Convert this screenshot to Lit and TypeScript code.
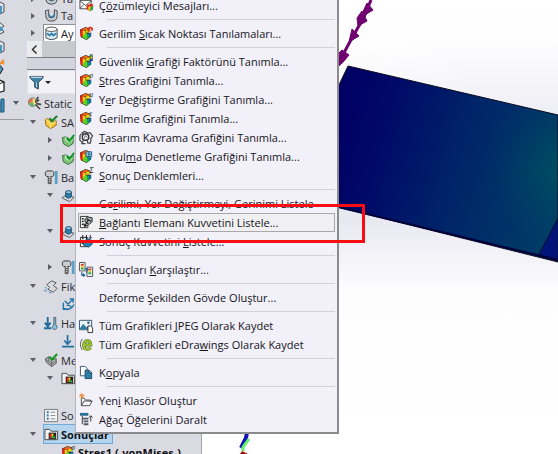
import { LitElement, html, css, svg, nothing, TemplateResult } from "lit";
import { customElement } from "lit/decorators.js";
import { classMap } from "lit/directives/class-map.js";

const cube = svg`
  <path d="M1 4 7 1l5 2v3l-4 2 5-1v4l-5 4-6-3z" fill="#222"/>
  <path d="M1.500 4 5 3v10L1.500 11z" fill="#f02015"/>
  <path d="M3.500 3.500 7 1.500l4.500 2L7 5z" fill="#f86a10"/>
  <path d="M4 4.500 7 5.500v4L4 11z" fill="#ffd21a"/>
  <path d="M7 5 11.500 3.500v2.500L8 7.500z" fill="#e8e010"/>
  <path d="M4 10l3-2.500 1.500.5v6.500L4 12.500z" fill="#5fd320"/>
  <path d="M8.500 9 12.500 7.500v3.500L8.500 14.500z" fill="#12b04a"/>
  <path d="M10.500 8.200 12.500 7.500v3.500l-2 1.600z" fill="#1560d0"/>`;

const badge = (t: string) => svg`${cube}<text class="badge" x="11" y="5">${t}</text>`;

const miniPlot = svg`<path d="M5 6h8v7H5z" fill="#222"/><path d="M6 7h2v5H6z" fill="#e8261c"/><path d="M8 7h2v3H8z" fill="#f7d51d"/><path d="M8 10h4v2H8z" fill="#35b53a"/>`;

const bolt = svg`<path d="M1.500 2.500 3 1h6l1.500 1.500v3L9 7H3L1.500 5.500z" fill="#c9ccd0" stroke="#333"/><path d="M4.500 7v7.500h3V7M4.500 9h3M4.500 11h3M4.500 13h3" fill="#eee" stroke="#444"/><path d="M11.500 1h3v14h-3z" fill="#5ba0c8"/>`;

const bearing = svg`<path d="M1 10.500 6 7l8 3-5 4.500z" fill="#d9dbe0" stroke="#555"/><path d="M5 4.500v5l3 1.500 3-1.500v-5z" fill="#2b80ae" stroke="#1d4c6b"/><ellipse cx="8" cy="4.500" rx="3" ry="1.800" fill="#8cc5e0" stroke="#1d4c6b"/>`;

const folderPlot = svg`<path d="M1 13.500v-11h5l1.500 2h7v9z" fill="#f2f2f4" stroke="#444"/>${miniPlot}`;

const greenPart = svg`<path d="M1.500 5 5 4l4 2.500L13 5v6l-5 3.500-5.500-3z" fill="#7cc576" stroke="#2f6b35"/><path d="M5 4v4l4 2 4-3" fill="none" stroke="#d3efcf"/><path d="M6.500 5.500 9 8.500 14 2" fill="none" stroke="#119a24" stroke-width="2"/>`;

const icons: Record<string, TemplateResult> = {
  mail: svg`<path d="M1 2.500h12v9H1z" fill="#fff" stroke="#444"/><path d="m1 3 6 5 6-5M1 11l4-4M13 11 9 7" fill="none" stroke="#444"/><path d="m8 8 4-2 3 1v5l-3 2-4-2z" fill="#e22c1c"/><path d="M10 9h3v5l-3-1z" fill="#f4d01c"/><path d="M12 10l3-2v4l-3 2z" fill="#20a548"/>`,
  hotspot: svg`${cube}<path d="M10 6V3q2-3 4 0v2" fill="none" stroke="#e52a17" stroke-width="1.800"/>`,
  factor: svg`${cube}<path d="M11.500.5h3v7h-3z" fill="#222"/><path d="M12 1h2v2h-2z" fill="#36b63b"/><path d="M12 3h2v2h-2z" fill="#f6dc1a"/><path d="M12 5h2v2h-2z" fill="#1850cf"/>`,
  stress: badge("σ"),
  disp: badge("u"),
  strain: badge("ε"),
  equation: badge("Σ"),
  insight: svg`<path d="M4 2.500 6 1.500 9 3h3l2.500 3.500L12 10" fill="none" stroke="#444" stroke-width="1.300"/><path d="M2.500 4 1 6v5l2 2M3.500 2v2.500" fill="none" stroke="#444" stroke-width="1.300"/><circle cx="7" cy="7.500" r="3.500" fill="#dfe6ee" stroke="#333" stroke-width="1.500"/><path d="M5 10.500 3 14.500h4M8.500 10.500l1 3.500h2.500l1-4" stroke="#444" stroke-width="1.300" fill="none"/><path d="M5.500 8.500 7 6l2 2" fill="none" stroke="#6a7580"/>`,
  fatigue: svg`${cube}<path d="M7.500 3h6v5h-6z" fill="#a8d6ec" stroke="#226285"/><path d="M9 5.500h4M10.500 3v5" stroke="#226285"/>`,
  forces: svg`<path d="M1.500 1.500h8v12h-8z" fill="#f4f4f4" stroke="#333"/><path d="M3 4h2M3 7h2M3 10h2" stroke="#222" stroke-width="1.500"/><path d="m6 5 3-3 5 1v4l-3 3-4-2z" fill="#aeb2b6" stroke="#222"/><path d="m10 5-4 7m-1-3 1 3 3-1M8 4l5 3" stroke="#222" fill="none" stroke-width="1.300"/>`,
  result: svg`<path d="M1.500 3.500h7v10h-7z" fill="#f4f4f4" stroke="#333"/><path d="M3 7h2M3 10h3" stroke="#222" stroke-width="1.500"/><path d="m5 8 4-3 5 2v4l-4 3-5-2z" fill="#2a83b5" stroke="#1b4c6e"/><path d="M4 1v4M8 1v4M12 1v4M2.500 3.500 4 5l1.500-1.500M6.500 3.500 8 5l1.500-1.500M10.500 3.500 12 5l1.500-1.500" stroke="#222" fill="none"/>`,
  compare: svg`<path d="M.5.500h6v9h-6zM8.500 5.500h6v10h-6z" fill="#eee" stroke="#555"/><path d="M2 2h3v2H2z" fill="#e33123"/><path d="M2 4h3v2H2z" fill="#f1cf23"/><path d="M2 6h3v2H2z" fill="#2da84a"/><path d="M10 7h3v2h-3z" fill="#e33123"/><path d="M10 9h3v2h-3z" fill="#f1cf23"/><path d="M10 11h3v2h-3z" fill="#2da84a"/><path d="M3 11v3h3m-1.500-1.500L6 14l-1.500 1.500M6.500 8q2-2 3 0l-1.500 2v1.500" fill="none" stroke="#1c5f92" stroke-width="1.300"/>`,
  jpeg: svg`<path d="M.5 2.500h13v10H.5z" fill="#eaf4fa" stroke="#31566e"/><path d="M1 11l3.500-5L8 10l2-2 3 4H1z" fill="#2e7ba5"/><circle cx="10" cy="5" r="1.300" fill="#31566e"/><path d="M9.500 8.500h3l2 2v5h-5z" fill="#fff" stroke="#333"/>`,
  edraw: svg`<path d="M3.500 2Q-.5 8 3.500 14" fill="none" stroke="#555"/><path d="M5.500 8.500h7Q12.500 4 9 4T5 8.500q0 4.500 4 4.500 2 0 3.500-1.500" fill="none" stroke="#557a12" stroke-width="3.200"/><path d="M5.500 8.500h7Q12.500 4 9 4T5 8.500q0 4.500 4 4.500 2 0 3.500-1.500" fill="none" stroke="#a5cc35" stroke-width="1.800"/>`,
  copy: svg`<path d="M1.500 1.500h5l2 2v8h-7z" fill="#fff" stroke="#34536a"/><path d="M6.500 5.500h4l3 3v6h-7z" fill="#2b7fae" stroke="#1b4a68"/><path d="M10.500 5.500v3h3z" fill="#d4e9f4" stroke="#1b4a68"/>`,
  folder: svg`<path d="M2.500 13.500v-8h3l1.500 2h5v2M2.500 13.500l3-5h8.500l-2.500 5z" fill="#f5f5f7" stroke="#4a4a4a"/><path d="M3 0v6M0 3h6M1 1l4 4M5 1 1 5" stroke="#ee8b2d"/>`,
  collapse: svg`<path d="M1 1h9v3H1z" fill="#2c6f96"/><path d="M4 6h6v2H4zM5 9h5v2H5zM5 12h5v2H5z" fill="#4c5a64"/><path d="M3.500 4v9M12.500 10V4m-2 2 2-2 2 2" fill="none" stroke="#333"/>`,
  study: svg`<circle cx="6" cy="6.500" r="4.500" fill="#f4e27a"/><path d="M6 2a4.500 4.500 0 0 0-4 6.500L6 6.500z" fill="#e8704d"/><path d="M2 8.500A4.500 4.500 0 0 0 8 10.500L6 6.500z" fill="#5cbf72"/><path d="m9 9 5 5M12 1 9 6M13 4 9 7M10 8l5 1" stroke="#333" stroke-width="1.500"/><circle cx="6" cy="6.500" r="4.500" fill="none" stroke="#777"/>`,
  part: svg`<path d="M1.500 5 4 3.500l4 4L13 6v5l-6 3.500L2 11z" fill="#f4c936" stroke="#9c6d0c"/><path d="m3 5 4 5 6-3M7 10v4" fill="none" stroke="#fff1a8"/><path d="M6 3.500 8.500 6.500 14 1" fill="none" stroke="#17802a" stroke-width="2.200"/>`,
  green: greenPart,
  bolt,
  bearing,
  fixture: svg`<path d="M3 6 8 2l5 2-3 3 4 3-4 4-6-3 2-2z" fill="#d7dade" stroke="#555"/><path d="M1 9l2 1M0 12l3 1M5 14l3 1" stroke="#3184b4"/>`,
  anchor: svg`<path d="m4 4 8 8M12 3l-6 6M2.500 6v7h6M9 2h4v4" fill="none" stroke="#2575a6" stroke-width="1.500"/><path d="M3 12q6 4 11-4" fill="none" stroke="#2575a6" stroke-width="1.500"/>`,
  load: svg`<path d="M4 1v9M1 7l3 4 3-4M0 13h8" fill="none" stroke="#1f6c9c" stroke-width="2"/><path d="M10.500 1.500h2v8a2.500 2.500 0 1 1-2 0z" fill="#8bbfda" stroke="#4a6170"/>`,
  down: svg`<path d="M7 1v10M3.500 7 7 11l3.500-4M1 13.500h13" fill="none" stroke="#236f9d" stroke-width="1.800"/>`,
  mesh: svg`<path d="M1.500 6 5 4l4 3 4-1v5l-5 3.500L2.500 10z" fill="#aeb1b5" stroke="#555"/><path d="m2 7 6 5 5-4M5 4v5M8 8v6" fill="none" stroke="#666"/><path d="M6 4 8.500 7 14 1" fill="none" stroke="#159526" stroke-width="2.200"/>`,
  folderPlot,
  options: svg`<path d="M.5 1.500h14v13H.5z" fill="#f3f4f6" stroke="#777"/><path d="M3 4.500h2M3 8h2M3 11.500h2" stroke="#2c789f" stroke-width="2"/><path d="M7 4.500h5M7 8h5M7 11.500h5" stroke="#888"/>`,
  stress1: badge("σ"),
  cup: svg`<path d="M1.500 3 5 2v6q0 2.500 3 2.500t3-2.500V2l3 1v5q0 6-6 6T2 8z" fill="#c3cdd4" stroke="#444"/><path d="M5 7q3 5 6 0" fill="none" stroke="#2b7ca8" stroke-width="1.500"/>`,
  barrel: svg`<path d="M2 3.500v9q6 4 12 0v-9z" fill="#dbeaf2" stroke="#444"/><ellipse cx="8" cy="3.500" rx="6" ry="2.300" fill="#fff" stroke="#444"/><path d="m3 8 3 2 2-2 2 2 3-2" fill="none" stroke="#2c80ad" stroke-width="2"/>`,
  funnel: svg`<path d="M1 1.500h14v1.500L10 8v7l-4-2V8L1 3z" fill="#3b83ab" stroke="#33454f"/><path d="M2 2.500h12" stroke="#b6d9ea" stroke-width="1.500"/><path d="M8 8v5" stroke="#b6d9ea"/>`,
  tool: svg`<path d="M1 4 8 1l6 3v8l-6 3-7-3z" fill="#dfe3e8" stroke="#4a4f55"/><path d="M8 6h4v7l-4 1z" fill="#4a97c0"/>`,
  tool2: svg`<path d="M1 5 8 1l6 5-3 2 3 4-6 3-7-3z" fill="#e4e6ea" stroke="#4a4f55"/><path d="M7 9q4-5 6 0v2H7z" fill="#4a97c0"/>`,
  wand: svg`<path d="M1 5q8-2 12 5l-3 5-9-3z" fill="#4a97c0" stroke="#222"/><path d="m10 5 4-4M14 5l-2-2" stroke="#ee8b2d" stroke-width="2"/>`,
  box: svg`<path d="M1 4 7 1l7 3v9l-7 2-6-2z" fill="#fff" stroke="#222" stroke-width="1.300"/><path d="m1 4 8 2 5-2M9 6v9" fill="none" stroke="#222"/>`,
  columns: svg`<path d="M1 3h4v12H1zM6 3h4v12H6zM11 1h3v13h-3z" fill="#3d92c0" stroke="#1d5478"/>`,
};

const icon = (name: string) =>
  html`<svg class="icon" viewBox="0 0 16 16" aria-hidden="true">${icons[name]}</svg>`;

type Entry = { icon?: string; label: string; hot?: boolean } | null;

const MENU: Entry[] = [
  { icon: "mail", label: "Ç_özümleyici Mesajları..." },
  null,
  { icon: "hotspot", label: "Gerilim _Sıcak Noktası Tanılamaları..." },
  null,
  { icon: "factor", label: "Güvenlik _Grafiği Faktörünü Tanımla..." },
  { icon: "stress", label: "_Stres Grafiğini Tanımla..." },
  { icon: "disp", label: "Y_er Değiştirme Grafiğini Tanımla..." },
  { icon: "strain", label: "Gerilme Grafi_ğini Tanımla..." },
  { icon: "insight", label: "_Tasarım Kavrama Grafiğini Tanımla..." },
  { icon: "fatigue", label: "Yorul_ma Denetleme Grafiğini Tanımla..." },
  { icon: "equation", label: "_Sonuç Denklemleri..." },
  null,
  { label: "Ge_rilimi, Yer Değiştirmeyi, Gerinimi Listele" },
  { icon: "forces", label: "_Bağlantı Elemanı Kuvvetini Listele...", hot: true },
  { icon: "result", label: "Sonuç Kuvvetini _Listele..." },
  null,
  { icon: "compare", label: "Sonuçları _Karşılaştır..." },
  null,
  { label: "Deforme Şekilden Gövde Oluştur..." },
  null,
  { icon: "jpeg", label: "Tüm Grafikleri _JPEG Olarak Kaydet" },
  { icon: "edraw", label: "Tüm Grafikleri eDra_wings Olarak Kaydet" },
  null,
  { icon: "copy", label: "K_opyala" },
  null,
  { icon: "folder", label: "Yen_i Klasör Oluştur" },
  { icon: "collapse", label: "Ağaç Öğelerini Daralt" },
];

interface Node { level: number; arrow?: "open" | "closed"; icon?: string; label?: string; bold?: boolean; selected?: boolean }

const TREE: Node[] = [
  { level: 0, arrow: "open", icon: "study", label: "Static" },
  { level: 1, arrow: "open", icon: "part", label: "SA" },
  { level: 2, arrow: "closed", icon: "green" },
  { level: 2, arrow: "closed", icon: "green" },
  { level: 1, arrow: "open", icon: "bolt", label: "Ba" },
  { level: 2, arrow: "open", icon: "bearing" },
  { level: 2 },
  { level: 2, arrow: "open", icon: "bearing" },
  { level: 2 },
  { level: 2, arrow: "closed", icon: "bolt" },
  { level: 1, arrow: "open", icon: "fixture", label: "Fik" },
  { level: 2, icon: "anchor" },
  { level: 1, arrow: "open", icon: "load", label: "Ha" },
  { level: 2, icon: "down" },
  { level: 1, arrow: "open", icon: "mesh", label: "Me" },
  { level: 2, arrow: "open", icon: "folderPlot" },
  { level: 2 },
  { level: 1, icon: "options", label: "So" },
  { level: 1, arrow: "open", icon: "folderPlot", label: "Sonuçlar", bold: true, selected: true },
  { level: 2, icon: "stress1", label: "Stres1 (-vonMises-)", bold: true },
];

const base = css`
  * { box-sizing: border-box; }
  button { font: inherit; color: inherit; background: none; border: 0; padding: 0; margin: 0; text-align: left; }
  .icon { display: block; width: 16px; height: 16px; flex: none; overflow: visible; }
  .badge { font: italic 8px "Liberation Serif", serif; fill: #111; }
`;

@customElement("context-menu")
export class ContextMenu extends LitElement {
  static styles = [base, css`
    :host { display: block; background: #f2f0f8; border: 1px solid #b4b4bc; border-right: 2px solid #8c8c8f; border-bottom: 2px solid #8c8c8f; padding: 0 2px 3px; color: #15151c; font: 11px/17px "Open Sans", "Noto Sans", sans-serif; }
    .item { display: grid; grid-template-columns: 15px 1fr; gap: 5px; align-items: center; width: 100%; height: 19px; border: 1px solid transparent; white-space: nowrap; }
    .item.hot { background: #f0eff1; border-color: #a8a8ac; }
    .icon { width: 15px; height: 15px; }
    .sep { height: 9px; padding: 4px 0; margin-left: 29px; }
    .sep::before { content: ""; display: block; height: 1px; background: #d2d1da; }
    .text { grid-column: 2; }
  `];

  private label(text: string) {
    const at = text.indexOf("_");
    if (at < 0) return text;
    return html`${text.slice(0, at)}<u>${text[at + 1]}</u>${text.slice(at + 2)}`;
  }

  render() {
    return html`<div role="menu">${MENU.map((e) => e
      ? html`<button role="menuitem" class=${classMap({ item: true, hot: !!e.hot })}>${e.icon ? icon(e.icon) : nothing}<span class="text">${this.label(e.label)}</span></button>`
      : html`<div class="sep" role="separator"></div>`)}</div>`;
  }
}

@customElement("feature-tree")
export class FeatureTree extends LitElement {
  static styles = [base, css`
    :host { display: block; color: #26262c; font: 11px/17px "Open Sans", "Noto Sans", sans-serif; min-width: 0; }
    .upper { margin-left: 15px; height: 41px; display: flex; flex-direction: column; justify-content: flex-end; overflow: hidden; }
    .part { display: flex; align-items: center; height: 17px; flex: none; gap: 2px; padding-left: 2px; }
    .part .name { display: flex; align-items: center; gap: 2px; flex: 1; height: 17px; padding-left: 1px; }
    .part .name.boxed { background: #fff; border: 1px solid #8d8f98; border-bottom: 0; padding-left: 0; }
    .scroll { margin-left: 15px; height: 16px; display: flex; background: #c9cacd; }
    .scroll button { width: 15px; background: #ececee; display: grid; place-items: center; }
    .scroll svg { width: 7px; height: 9px; }
    .split { margin-left: 15px; height: 13px; border: solid #7c7e86; border-width: 1px 0; background: #d3d5de; }
    .filter { margin-left: 15px; height: 24px; display: flex; align-items: center; background: #f2f2f6; border: 1px solid #e4e5ea; padding-left: 1px; }
    .filter button { display: flex; align-items: center; gap: 1px; }
    .row { display: flex; align-items: center; height: 18px; gap: 3px; white-space: nowrap; }
    .l1 { margin-left: 17px; margin-top: 1px; }
    .l2 { margin-left: 34px; }
    .arrow { width: 8px; height: 8px; margin-right: 4px; flex: none; display: grid; place-items: center; }
    .arrow svg, .filter .caret { display: block; width: 6px; height: 6px; }
    .icon { width: 15px; height: 15px; }
    .bold { font-weight: 700; color: #111; }
    .body { display: flex; align-items: center; gap: 2px; height: 18px; padding-right: 3px; outline: 1px solid transparent; }
    .selected { background: #b5d5ef; outline-color: #6fa9d8; }
  `];

  private arrow(kind?: "open" | "closed") {
    if (!kind) return html`<span class="arrow"></span>`;
    return html`<button class="arrow" aria-label=${kind === "open" ? "Daralt" : "Genişlet"}><svg viewBox="0 0 6 6"><path d=${kind === "open" ? "M0 1h6L3 5z" : "M1 0v6l4-3z"} fill="#5d5e66"/></svg></button>`;
  }

  render() {
    return html`
      <div class="upper">
        <div class="part">${this.arrow("closed")}<span class="name">${icon("cup")}Ta</span></div>
        <div class="part">${this.arrow("closed")}<span class="name">${icon("cup")}Ta</span></div>
        <div class="part">${this.arrow("closed")}<span class="name boxed">${icon("barrel")}Ay</span></div>
      </div>
      <div class="scroll"><button aria-label="Sola kaydır"><svg viewBox="0 0 7 9"><path d="M5.500.5 1.500 4.500l4 4" fill="none" stroke="#333" stroke-width="1.500"/></svg></button></div>
      <div class="split"></div>
      <div class="filter"><button aria-label="Filtre">${icon("funnel")}<svg class="caret" viewBox="0 0 6 6"><path d="M0 2h6L3 5z" fill="#222"/></svg></button></div>
      <div role="tree">
        ${TREE.map((n) => html`<div role="treeitem" class="row l${n.level}">${this.arrow(n.arrow)}<span class=${classMap({ body: true, bold: !!n.bold, selected: !!n.selected })}>${n.icon ? icon(n.icon) : nothing}${n.label ?? nothing}</span></div>`)}
      </div>`;
  }
}

@customElement("model-view")
export class ModelView extends LitElement {
  static styles = css`
    :host { display: block; overflow: hidden; background: linear-gradient(#fff 0, #fdfdfe 10%, #ebebf3 28%, #e8e8f1 48%, #fdfdfe 64%, #fff 100%); }
    .scene { display: block; width: 100%; height: 100%; }
  `;

  render() {
    return html`<svg class="scene" viewBox="202 0 356 454" preserveAspectRatio="xMinYMin slice" role="img" aria-label="Model">
      <defs>
        <linearGradient id="plate" x1="338" y1="130" x2="558" y2="190" gradientUnits="userSpaceOnUse">
          <stop offset="0" stop-color="#000064"/><stop offset=".2" stop-color="#000a68"/><stop offset=".55" stop-color="#002468"/><stop offset="1" stop-color="#003c66"/>
        </linearGradient>
        <radialGradient id="glow" cx="565" cy="170" r="80" gradientUnits="userSpaceOnUse">
          <stop offset="0" stop-color="#005060"/><stop offset="1" stop-color="#004066" stop-opacity="0"/>
        </radialGradient>
        <linearGradient id="haze" x1="0" x2="1" y1="0" y2="0"><stop offset="0" stop-color="#fff"/><stop offset="1" stop-color="#fff" stop-opacity="0"/></linearGradient>
      </defs>
      <path d="M202 0h280v120H202z" fill="url(#haze)"/>
      <path d="M338 87 348 66 558 115V262L338 207z" fill="url(#plate)"/>
      <path d="M338 87 348 66 558 115V262L338 207z" fill="url(#glow)" stroke="#0b0d20"/>
      <path d="M558 218 538 256 558 261z" fill="#001478" stroke="#06102c"/>
      <path d="M338 207 558 260" stroke="#00003a" stroke-width="2"/>
      <g fill="#70006f" stroke="#70006f">
        <path d="M371 0 364 17 352 38 340 60" fill="none" stroke-width="3"/>
        <path d="M367 3 373 10 360 18zM362 11 367 21 358 26 357 18zM352 29 359 36 349 42zM342 50 349 55 344 61 338 67V54z"/>
      </g>
      <path d="M247 432 246 438 241 448" fill="none" stroke="#1010b4" stroke-width="4"/>
      <path d="M249 439 243 447v4" fill="none" stroke="#66ee70" stroke-width="3"/>
      <path d="M240 454h8l-6-3z" fill="#a01010"/>
    </svg>`;
  }
}

@customElement("app-root")
export class AppRoot extends LitElement {
  static styles = [base, css`
    :host { display: block; position: relative; height: 100vh; overflow: hidden; background: #fff; }
    .layout { display: grid; grid-template-columns: 202px 1fr; height: 100%; }
    .side { display: grid; grid-template-columns: 12px 1fr; align-items: start; background: #d9dae2; border-right: 1px solid #a3a4ac; overflow: hidden; }
    .tools { width: 24px; height: 120px; padding-bottom: 6px; border-bottom: 1px solid #9b9ca4; display: flex; flex-direction: column; justify-content: flex-end; gap: 4px; }
    .tool { width: 6px; height: 16px; display: flex; justify-content: flex-end; overflow: hidden; }
    .menu { position: absolute; left: 75px; top: -5px; width: 264px; }
    .mark { position: absolute; left: 60px; top: 204px; width: 305px; height: 39px; border: 3px solid #f80d12; pointer-events: none; }
  `];

  render() {
    return html`
      <div class="layout">
        <aside class="side">
          <div class="tools">${["tool", "tool2", "tool", "wand", "box", "columns"].map((t) => html`<button class="tool" aria-label="Araç">${icon(t)}</button>`)}</div>
          <feature-tree></feature-tree>
        </aside>
        <model-view></model-view>
      </div>
      <context-menu class="menu"></context-menu>
      <div class="mark"></div>`;
  }
}
